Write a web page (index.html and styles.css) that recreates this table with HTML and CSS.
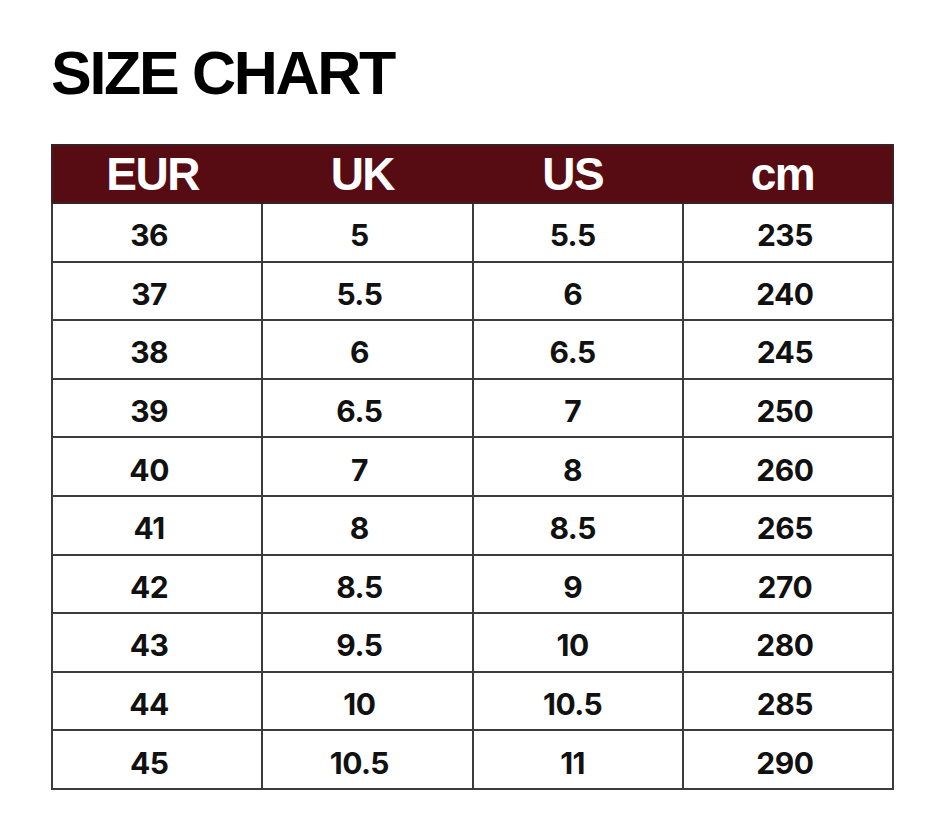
FILE: index.html
```html
<!DOCTYPE html>
<html lang="en">
<head>
<meta charset="utf-8">
<title>Size Chart</title>
<link rel="stylesheet" href="styles.css">
</head>
<body>
<main class="page">
  <h1 class="title">SIZE CHART</h1>
  <table class="chart">
    <thead>
      <tr><th>EUR</th><th>UK</th><th>US</th><th>cm</th></tr>
    </thead>
    <tbody>
      <tr><td>36</td><td>5</td><td>5.5</td><td>235</td></tr>
      <tr><td>37</td><td>5.5</td><td>6</td><td>240</td></tr>
      <tr><td>38</td><td>6</td><td>6.5</td><td>245</td></tr>
      <tr><td>39</td><td>6.5</td><td>7</td><td>250</td></tr>
      <tr><td>40</td><td>7</td><td>8</td><td>260</td></tr>
      <tr><td>41</td><td>8</td><td>8.5</td><td>265</td></tr>
      <tr><td>42</td><td>8.5</td><td>9</td><td>270</td></tr>
      <tr><td>43</td><td>9.5</td><td>10</td><td>280</td></tr>
      <tr><td>44</td><td>10</td><td>10.5</td><td>285</td></tr>
      <tr><td>45</td><td>10.5</td><td>11</td><td>290</td></tr>
    </tbody>
  </table>
</main>
</body>
</html>
```
FILE: styles.css
```css
html, body {
  margin: 0;
  padding: 0;
  background: #ffffff;
}

.page {
  padding: 43px 47px 0 51px;
}

.title {
  margin: 0 0 41px 0;
  font-family: "Liberation Sans", Arial, sans-serif;
  font-weight: 700;
  font-size: 61px;
  line-height: 60px;
  letter-spacing: -2.3px;
  color: #000;
}

.chart {
  width: 843px;
  border-collapse: collapse;
  table-layout: fixed;
}

.chart th {
  height: 56px;
  padding: 0 10px 0 0;
  background: #560c12;
  color: #ffffff;
  font-family: "Liberation Sans", Arial, sans-serif;
  font-weight: 700;
  font-size: 46px;
  letter-spacing: -1.5px;
  text-align: center;
  vertical-align: middle;
  border: 2px solid #3a2224;
  border-left: none;
  border-right: none;
}

.chart th:first-child {
  border-left: 2px solid #3a2224;
}

.chart th:last-child {
  border-right: 2px solid #3a2224;
}

.chart td {
  height: 58.6px;
  padding: 6px 10px 0 0;
  box-sizing: border-box;
  border: 2px solid #3c3c3c;
  font-family: Inter, "Noto Sans", sans-serif;
  font-weight: 700;
  font-size: 30px;
  letter-spacing: -0.5px;
  color: #111;
  text-align: center;
  vertical-align: middle;
}

.chart td:nth-child(1),
.chart td:nth-child(2) {
  padding-right: 16px;
}

.chart td:nth-child(4) {
  padding-right: 6px;
}
```
